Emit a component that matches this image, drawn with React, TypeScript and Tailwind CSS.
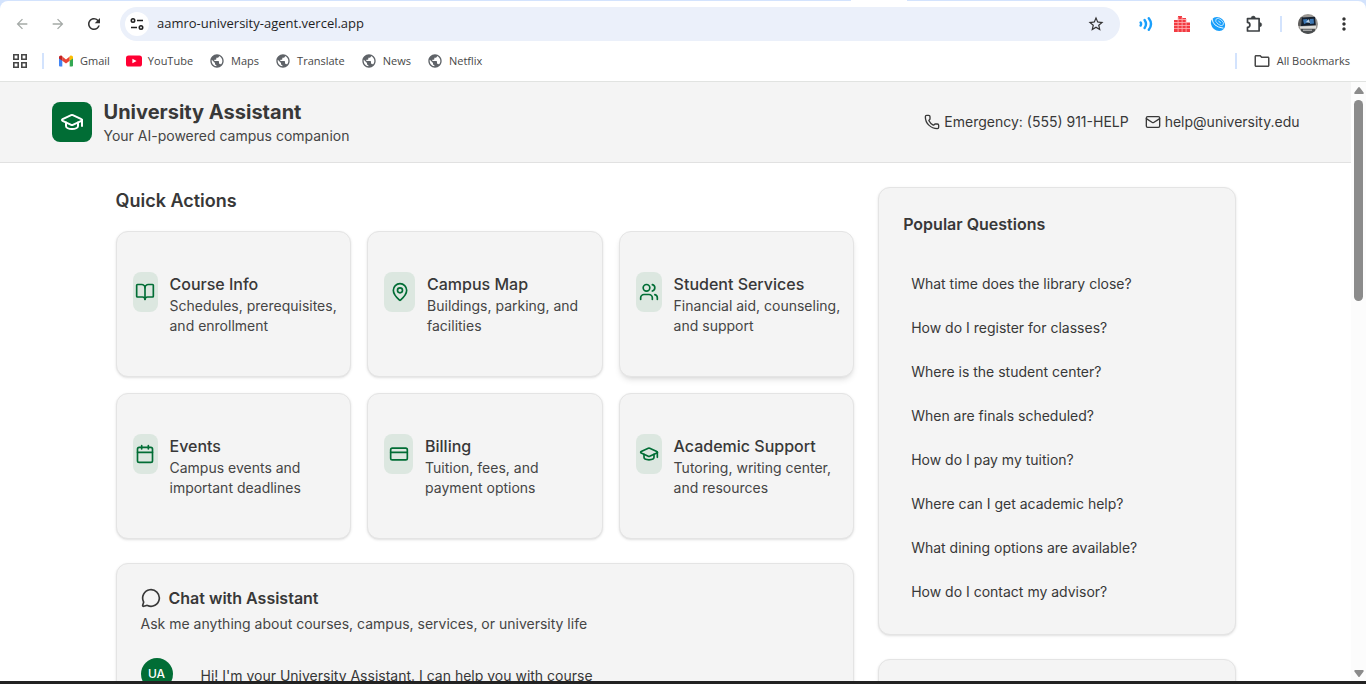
import type { ReactNode } from "react";
import {
  BookOpen,
  Calendar,
  CreditCard,
  GraduationCap,
  Mail,
  MapPin,
  MessageCircle,
  Phone,
  Users,
  type LucideIcon,
} from "lucide-react";
import {
  MdArrowBack,
  MdArrowForward,
  MdMoreVert,
  MdOutlineFolder,
  MdPublic,
  MdRefresh,
  MdStarBorder,
} from "react-icons/md";

type Action = {
  title: string;
  text: string;
  icon: LucideIcon;
  tile: string;
  raised?: boolean;
};

const actions: Action[] = [
  { title: "Course Info", text: "Schedules, prerequisites, and enrollment", icon: BookOpen, tile: "w-[25px]" },
  { title: "Campus Map", text: "Buildings, parking, and facilities", icon: MapPin, tile: "w-[31px]" },
  { title: "Student Services", text: "Financial aid, counseling, and support", icon: Users, tile: "w-[26px]", raised: true },
  { title: "Events", text: "Campus events and important deadlines", icon: Calendar, tile: "w-[25px]" },
  { title: "Billing", text: "Tuition, fees, and payment options", icon: CreditCard, tile: "w-[29px]" },
  { title: "Academic Support", text: "Tutoring, writing center, and resources", icon: GraduationCap, tile: "w-[26px]" },
];

const questions = [
  "What time does the library close?",
  "How do I register for classes?",
  "Where is the student center?",
  "When are finals scheduled?",
  "How do I pay my tuition?",
  "Where can I get academic help?",
  "What dining options are available?",
  "How do I contact my advisor?",
];

function SiteInfoIcon() {
  return (
    <svg width="14" height="14" viewBox="0 0 14 14" fill="none" stroke="#1f1f1f" strokeWidth="1.6">
      <circle cx="3" cy="3.5" r="1.7" />
      <path d="M7 3.5h6M1 10.5h6" />
      <circle cx="11" cy="10.5" r="1.7" />
    </svg>
  );
}

function AppsIcon() {
  return (
    <svg width="16" height="16" viewBox="0 0 16 16" fill="none" stroke="#474747" strokeWidth="1.6">
      <path d="M1.8 1.8h4.4v4.4H1.8zM9.8 1.8h4.4v4.4H9.8zM1.8 9.8h4.4v4.4H1.8zM9.8 9.8h4.4v4.4H9.8z" />
    </svg>
  );
}

function GmailIcon() {
  return (
    <svg width="16" height="16" viewBox="0 0 16 16">
      <path d="M1 13.5V4.6l3.3 2.5v6.4H2a1 1 0 0 1-1-1z" fill="#4285f4" />
      <path d="M15 13.5V4.6l-3.3 2.5v6.4H14a1 1 0 0 0 1-1z" fill="#34a853" />
      <path d="M4.3 3.6 8 6.4l3.7-2.8v4.2L8 10.6 4.3 7.8z" fill="#ea4335" />
      <path d="M1 4.4c0-1.7 1.8-2.4 3-1.5l.3.2v4.7L1 5.4z" fill="#c5221f" />
      <path d="M15 4.4c0-1.7-1.8-2.4-3-1.5l-.3.2v4.7L15 5.4z" fill="#fbbc04" />
    </svg>
  );
}

function YouTubeIcon() {
  return (
    <svg width="16" height="16" viewBox="0 0 16 16">
      <rect y="2.5" width="16" height="11" rx="2.6" fill="#ff0033" />
      <path d="m6.4 5.7 4.2 2.3-4.2 2.3z" fill="#fff" />
    </svg>
  );
}

function WavesIcon() {
  return (
    <svg width="16" height="16" viewBox="0 0 16 16" fill="none" stroke="#1a9ffb" strokeWidth="2.4" strokeLinecap="round">
      <path d="M2.6 6.4q1 1.6 0 3.2M6.6 4q2.8 4 0 8M10.8 2.2q4.4 5.8 0 11.6" />
    </svg>
  );
}

function BarsIcon() {
  return (
    <svg width="16" height="16" viewBox="0 0 16 16">
      <path d="M0 4h4v12H0zM4 0h4v16H4zM8 2h4v14H8zM12 6h4v10h-4z" fill="#f23b42" />
      <path
        d="M0 6.5h16M0 9.5h16M0 12.5h16M4 3.5h8M4.1 1v15M8.1 1v15M12.1 3v13"
        stroke="#ffb3b5"
        strokeWidth=".8"
      />
    </svg>
  );
}

function BallIcon() {
  return (
    <svg width="16" height="16" viewBox="0 0 16 16" fill="none">
      <ellipse cx="8" cy="8" rx="7.6" ry="6.4" transform="rotate(40 8 8)" fill="#1a9ffb" />
      <path d="M2.2 2.4q0 8.2 11.3 9.8" stroke="#fff" strokeWidth=".9" />
      <ellipse cx="9.6" cy="6" rx="4.6" ry="2.6" transform="rotate(40 9.6 6)" stroke="#fff" strokeWidth=".6" />
      <path d="m8.4 5 2.4 2" stroke="#fff" strokeWidth=".8" />
    </svg>
  );
}

function PuzzleIcon() {
  return (
    <svg width="18" height="18" viewBox="0 0 18 18" fill="none" className="shrink-0">
      <path
        d="M2.5 3.6h11.6V16H2.5v-3.6c3.2-.4 3.2-4.6 0-5z"
        stroke="#3c4043"
        strokeWidth="1.7"
        strokeLinejoin="round"
      />
      <path d="M6.2 3.2a2.1 2.1 0 0 1 4.2 0zM14.6 7.6a2.1 2.1 0 0 1 0 4.2z" fill="#3c4043" stroke="#3c4043" strokeWidth=".5" />
    </svg>
  );
}

function Avatar() {
  return (
    <svg width="20" height="20" viewBox="0 0 20 20">
      <defs>
        <clipPath id="avatar-clip">
          <circle cx="10" cy="10" r="10" />
        </clipPath>
      </defs>
      <g clipPath="url(#avatar-clip)">
        <path d="M0 0h20v20H0z" fill="#9a9793" />
        <path d="M0 3h5v9H0z" fill="#5f5e5d" />
        <path d="m4 3.5 13-.8.8 8.6L3 12z" fill="#15202f" />
        <path d="M5 5.5 9 5l2 3-5 2zM12 5l3.6-.3.4 4.8-4 .6z" fill="#3d78b4" />
        <path d="m8 8 3-3 1 4z" fill="#bcd3e8" />
        <path d="m2 12.5 16-.7v2.8H2z" fill="#dededb" />
        <path d="M3 15h14v5H3z" fill="#4b4e50" />
        <path d="M5 16.2h9" stroke="#c8c8c8" />
      </g>
    </svg>
  );
}

function ToolButton({ label, children }: { label: string; children: ReactNode }) {
  return (
    <button type="button" aria-label={label} className="flex size-5 items-center justify-center">
      {children}
    </button>
  );
}

function Bookmark({ icon, children }: { icon: ReactNode; children: ReactNode }) {
  return (
    <a href="#" className="flex items-center gap-1.5">
      {icon}
      {children}
    </a>
  );
}

function BrowserChrome() {
  const globe = <MdPublic className="size-4 text-[#5f6368]" />;
  return (
    <div className="shrink-0 border-b border-[#e1e3e1] bg-[#d3e3fd] font-['Open_Sans',sans-serif]">
      <div className="h-px pl-[62.3%]">
        <div className="h-px w-14 bg-white" />
      </div>
      <div className="rounded-t-lg bg-white">
        <div className="flex h-[46px] items-center px-3">
          <div className="flex gap-4 text-[#474747]">
            <ToolButton label="Back">
              <MdArrowBack className="size-4 text-[#a5aaa7]" />
            </ToolButton>
            <ToolButton label="Forward">
              <MdArrowForward className="size-4 text-[#a5aaa7]" />
            </ToolButton>
            <ToolButton label="Reload">
              <MdRefresh className="size-[18px] text-[#333]" />
            </ToolButton>
          </div>
          <div className="ml-4 flex h-[34px] flex-1 items-center rounded-full bg-[#ebf0fa] pr-3.5 pl-[5px]">
            <button
              type="button"
              aria-label="View site information"
              className="flex size-6 items-center justify-center rounded-full bg-white"
            >
              <SiteInfoIcon />
            </button>
            <input
              aria-label="Address"
              defaultValue="aamro-university-agent.vercel.app"
              className="ml-2 min-w-0 flex-1 bg-transparent text-[13px] text-[#1f1f1f] outline-none"
            />
            <ToolButton label="Bookmark this tab">
              <MdStarBorder className="size-[18px] text-[#333]" />
            </ToolButton>
          </div>
          <div className="ml-4 flex items-center gap-4">
            <ToolButton label="Sound extension"><WavesIcon /></ToolButton>
            <ToolButton label="Equalizer extension"><BarsIcon /></ToolButton>
            <ToolButton label="Network extension"><BallIcon /></ToolButton>
            <ToolButton label="Extensions"><PuzzleIcon /></ToolButton>
            <span className="h-4 w-0.5 bg-[#d3e3fd]" />
            <ToolButton label="Profile"><Avatar /></ToolButton>
            <ToolButton label="Menu">
              <MdMoreVert className="size-5 text-[#333]" />
            </ToolButton>
          </div>
        </div>
        <nav className="flex h-[34px] items-start pt-1 pr-4 pl-2.5 text-[11px] leading-5 text-[#474747]">
          <ToolButton label="Apps"><AppsIcon /></ToolButton>
          <span className="mt-0.5 ml-3 h-4 w-0.5 bg-[#d3e3fd]" />
          <div className="ml-3.5 flex gap-4">
            <Bookmark icon={<GmailIcon />}>Gmail</Bookmark>
            <Bookmark icon={<YouTubeIcon />}>YouTube</Bookmark>
            <Bookmark icon={globe}>Maps</Bookmark>
            <Bookmark icon={globe}>Translate</Bookmark>
            <Bookmark icon={globe}>News</Bookmark>
            <Bookmark icon={globe}>Netflix</Bookmark>
          </div>
          <span className="mt-0.5 mr-4 ml-auto h-4 w-0.5 bg-[#d3e3fd]" />
          <Bookmark icon={<MdOutlineFolder className="size-[18px]" />}>All Bookmarks</Bookmark>
        </nav>
      </div>
    </div>
  );
}

function ActionCard({ title, text, icon: Icon, tile, raised }: Action) {
  return (
    <button
      type="button"
      className={`flex items-start gap-3 rounded-xl border border-[#e4e4e4] bg-[#f4f4f4] py-10 pr-2 pl-4 text-left ${
        raised ? "shadow-md" : "shadow-sm"
      }`}
    >
      <span className={`flex h-10 shrink-0 items-center justify-center rounded-lg bg-[#dce7e0] text-[#016d35] ${tile}`}>
        <Icon className="size-5 shrink-0" />
      </span>
      <span className="min-w-0">
        <span className="block text-base font-medium">{title}</span>
        <span className="block text-sm text-[#454545]">{text}</span>
      </span>
    </button>
  );
}

function Scrollbar() {
  return (
    <div className="flex w-[15px] shrink-0 flex-col items-center bg-[#fcfcfc] pt-[5px] pb-1 text-[#8b8b8b]">
      <svg width="10" height="7" viewBox="0 0 10 7" fill="currentColor">
        <path d="M4.2.6a1 1 0 0 1 1.6 0L9.6 5.5Q10 7 8.8 7H1.2Q0 7 .4 5.5z" />
      </svg>
      <div className="mt-1.5 h-[34%] w-[9px] rounded-full bg-[#8b8b8b]" />
      <svg className="mt-auto" width="10" height="7" viewBox="0 0 10 7" fill="currentColor">
        <path d="M4.2 6.4a1 1 0 0 0 1.6 0L9.6 1.5Q10 0 8.8 0H1.2Q0 0 .4 1.5z" />
      </svg>
    </div>
  );
}

export default function App() {
  return (
    <div className="flex h-screen flex-col overflow-hidden bg-white">
      <BrowserChrome />
      <div className="flex min-h-0 flex-1">
        <div className="min-w-0 flex-1 overflow-hidden font-['Inter',sans-serif] text-[#383838]">
          <header className="border-b border-[#e1e1e1] bg-[#f4f4f4]">
            <div className="mx-auto flex max-w-7xl items-center justify-between px-4 py-4">
              <div className="flex items-center gap-3">
                <div className="flex size-10 items-center justify-center rounded-lg bg-[#016d35] text-white">
                  <GraduationCap className="size-6" />
                </div>
                <div>
                  <h1 className="text-xl font-bold">University Assistant</h1>
                  <p className="text-sm text-[#454545]">Your AI-powered campus companion</p>
                </div>
              </div>
              <div className="flex items-center gap-4 text-sm">
                <span className="flex items-center gap-1">
                  <Phone className="size-4" />
                  Emergency: (555) 911-HELP
                </span>
                <span className="flex items-center gap-1">
                  <Mail className="size-4" />
                  help@university.edu
                </span>
              </div>
            </div>
          </header>

          <main className="mx-auto grid max-w-6xl grid-cols-3 gap-6 px-4 py-6">
            <div className="col-span-2">
              <h2 className="mb-4 text-lg font-semibold">Quick Actions</h2>
              <div className="grid grid-cols-3 gap-4">
                {actions.map((action) => (
                  <ActionCard key={action.title} {...action} />
                ))}
              </div>

              <section className="mt-6 rounded-xl border border-[#e4e4e4] bg-[#f4f4f4] p-6 shadow-sm">
                <h2 className="flex items-center gap-2 text-base leading-5 font-semibold">
                  <MessageCircle className="size-5" />
                  Chat with Assistant
                </h2>
                <p className="mt-1.5 text-sm text-[#454545]">
                  Ask me anything about courses, campus, services, or university life
                </p>
                <div className="mt-6 flex items-start gap-3">
                  <span className="flex size-8 shrink-0 items-center justify-center rounded-full bg-[#016d35] text-xs font-medium text-white">
                    UA
                  </span>
                  <p className="max-w-md px-4 py-2 text-sm">
                    Hi! I'm your University Assistant. I can help you with course
                  </p>
                </div>
              </section>
            </div>

            <aside className="flex flex-col gap-6">
              <section className="rounded-xl border border-[#e4e4e4] bg-[#f4f4f4] p-6 shadow-sm">
                <h2 className="text-base font-semibold">Popular Questions</h2>
                <div className="mt-[30px] flex flex-col gap-2">
                  {questions.map((question) => (
                    <button key={question} type="button" className="h-9 w-full rounded-md px-2 text-left text-sm">
                      {question}
                    </button>
                  ))}
                </div>
              </section>
              <section className="flex-1 rounded-xl border border-[#e4e4e4] bg-[#f4f4f4] p-6 shadow-sm" />
            </aside>
          </main>
        </div>
        <Scrollbar />
      </div>
      <div className="h-[3px] shrink-0 bg-[#222]" />
    </div>
  );
}
